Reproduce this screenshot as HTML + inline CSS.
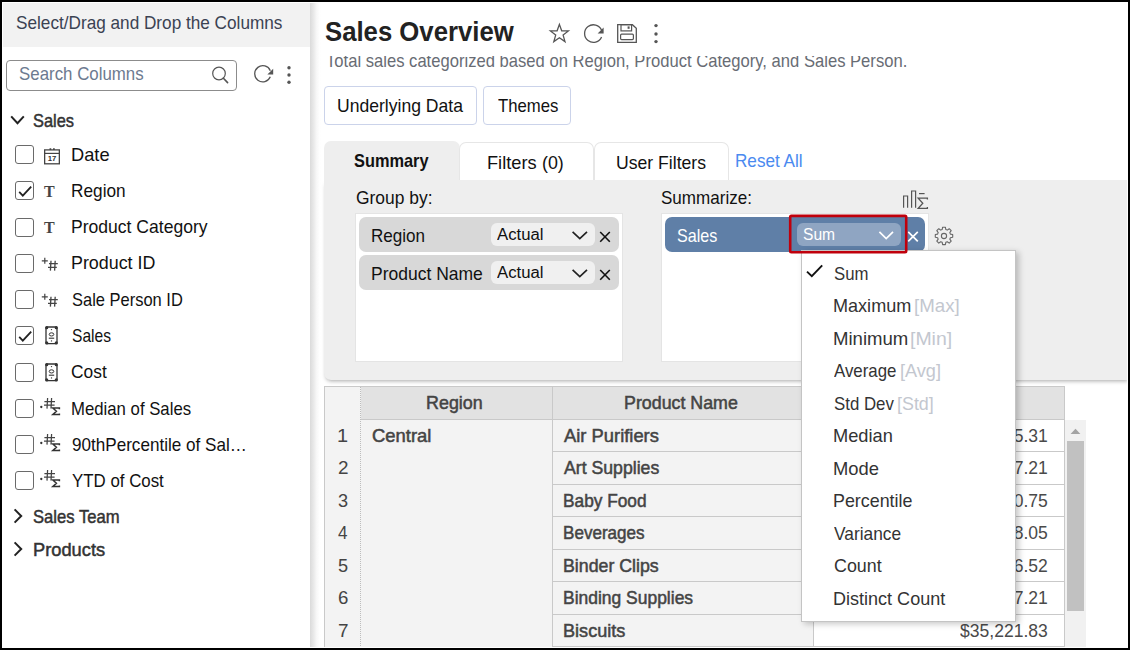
<!DOCTYPE html>
<html lang="en">
<head>
<meta charset="utf-8">
<title>Sales Overview</title>
<style>
html,body{margin:0;padding:0}
body{width:1130px;height:650px;overflow:hidden;background:#fff;position:relative;font-family:"Liberation Sans",sans-serif}
.t{position:absolute;white-space:nowrap;line-height:1;display:inline-block;transform-origin:0 50%}
.a{position:absolute;box-sizing:border-box}
svg{position:absolute;overflow:visible}
.cb{position:absolute;box-sizing:border-box;width:19px;height:19px;left:15px;border:1px solid #6a6a6a;border-radius:3px;background:#fff}
.pill{position:absolute;box-sizing:border-box;left:359px;width:260px;height:35px;border-radius:7px;background:#d8d8d8}
.sel{position:absolute;box-sizing:border-box;left:491px;width:104px;height:23px;border-radius:6px;background:#f0f0f0}
.hl{position:absolute;height:1px;background:#c9c9c9}
.vl{position:absolute;width:1px;background:#c9c9c9}
.ti{position:absolute;font-family:"Liberation Serif",serif;font-weight:700;font-size:16px;line-height:1;color:#444;left:44px}
</style>
</head>
<body>
<!-- ===== left panel ===== -->
<div class="a" style="left:2px;top:3px;width:308px;height:44px;background:#f2f2f2"></div>
<div class="a" style="left:310px;top:2px;width:12px;height:646px;background:linear-gradient(to right,#dadada 0,#e8e8e8 28%,#f7f7f7 55%,#fefefe 80%,#fff 100%)"></div>
<div class="a" style="left:6px;top:60px;width:231px;height:31px;border:1px solid #8c8c8c;border-radius:4px"></div>
<!-- search icon -->
<svg style="left:209px;top:64px" width="22" height="22" viewBox="0 0 22 22"><circle cx="10" cy="9.5" r="6.3" fill="none" stroke="#555" stroke-width="1.2"/><path d="M14.4 14.2 L18.6 18.6" stroke="#555" stroke-width="1.6" stroke-linecap="round"/></svg>
<!-- refresh icon -->
<svg style="left:252px;top:63px" width="22" height="22" viewBox="0 0 22 22"><path d="M18.31 7.77 A8.1 8.1 0 1 0 18.31 13.83" fill="none" stroke="#555" stroke-width="1.3"/><path d="M21.2 5.8 L21.2 11.6 L15.4 11.6 Z" fill="#555"/></svg>
<!-- dots -->
<svg style="left:285px;top:64px" width="8" height="22" viewBox="0 0 8 22"><circle cx="4" cy="3.7" r="1.7" fill="#555"/><circle cx="4" cy="11" r="1.7" fill="#555"/><circle cx="4" cy="18.3" r="1.7" fill="#555"/></svg>
<!-- chevrons -->
<svg style="left:9px;top:112px" width="18" height="16" viewBox="0 0 18 16"><path d="M2.2 4.4 L8.5 11.2 L14.8 4.4" fill="none" stroke="#222" stroke-width="2"/></svg>
<svg style="left:10px;top:507px" width="16" height="18" viewBox="0 0 16 18"><path d="M4.6 2.4 L11.2 9 L4.6 15.6" fill="none" stroke="#222" stroke-width="2"/></svg>
<svg style="left:10px;top:540px" width="16" height="18" viewBox="0 0 16 18"><path d="M4.6 2.4 L11.2 9 L4.6 15.6" fill="none" stroke="#222" stroke-width="2"/></svg>
<div class="cb" style="top:145.2px"></div>
<svg style="left:44px;top:148.0px" width="16" height="17" viewBox="0 0 16 17"><rect x="0.65" y="1.9" width="14.7" height="13.9" fill="none" stroke="#444" stroke-width="1.3"/><path d="M0.6 5.4 H15.4" stroke="#444" stroke-width="1.2"/><path d="M6.4 0.3 V2 M9.9 0.3 V2" stroke="#444" stroke-width="1.7"/><text x="8.1" y="12.9" font-family="Liberation Sans, sans-serif" font-size="6.4" font-weight="700" fill="#333" text-anchor="middle" textLength="8.6" lengthAdjust="spacingAndGlyphs">17</text></svg>
<div class="cb" style="top:181.4px"></div>
<svg style="left:15px;top:181.4px" width="19" height="19" viewBox="0 0 19 19"><path d="M4.2 10.9 L7.8 14.6 L16.2 5.6" fill="none" stroke="#222" stroke-width="1.8"/></svg>
<span class="ti" style="top:184.0px">T</span>
<div class="cb" style="top:217.6px"></div>
<span class="ti" style="top:220.2px">T</span>
<div class="cb" style="top:253.9px"></div>
<svg style="left:41px;top:257.1px" width="18" height="15" viewBox="0 0 18 15"><path d="M0.8 3.8 H6.8 M3.8 0.8 V6.8" stroke="#444" stroke-width="1.2" fill="none"/><path d="M10 3.8 L9.4 13.6 M14.2 3.8 L13.6 13.6 M8 6.6 H16.8 M7 10.3 H15.8" stroke="#444" stroke-width="1.3" fill="none"/></svg>
<div class="cb" style="top:290.1px"></div>
<svg style="left:41px;top:293.3px" width="18" height="15" viewBox="0 0 18 15"><path d="M0.8 3.8 H6.8 M3.8 0.8 V6.8" stroke="#444" stroke-width="1.2" fill="none"/><path d="M10 3.8 L9.4 13.6 M14.2 3.8 L13.6 13.6 M8 6.6 H16.8 M7 10.3 H15.8" stroke="#444" stroke-width="1.3" fill="none"/></svg>
<div class="cb" style="top:326.3px"></div>
<svg style="left:15px;top:326.3px" width="19" height="19" viewBox="0 0 19 19"><path d="M4.2 10.9 L7.8 14.6 L16.2 5.6" fill="none" stroke="#222" stroke-width="1.8"/></svg>
<svg style="left:45.4px;top:326.3px" width="13" height="19" viewBox="0 0 13 19"><rect x="1" y="1" width="11" height="16.6" rx="1.2" fill="none" stroke="#333" stroke-width="1.3"/><circle cx="1.7" cy="1.7" r="1.6" fill="#333"/><circle cx="11.3" cy="1.7" r="1.6" fill="#333"/><circle cx="1.7" cy="16.9" r="1.6" fill="#333"/><circle cx="11.3" cy="16.9" r="1.6" fill="#333"/><ellipse cx="6.5" cy="8.4" rx="2.3" ry="1.6" fill="none" stroke="#333" stroke-width="1"/><path d="M3.8 12.2 H9.2" stroke="#333" stroke-width="1.1"/><circle cx="6.5" cy="3.6" r="0.7" fill="#333"/><circle cx="6.5" cy="14.9" r="0.7" fill="#333"/></svg>
<div class="cb" style="top:362.5px"></div>
<svg style="left:45.4px;top:362.5px" width="13" height="19" viewBox="0 0 13 19"><rect x="1" y="1" width="11" height="16.6" rx="1.2" fill="none" stroke="#333" stroke-width="1.3"/><circle cx="1.7" cy="1.7" r="1.6" fill="#333"/><circle cx="11.3" cy="1.7" r="1.6" fill="#333"/><circle cx="1.7" cy="16.9" r="1.6" fill="#333"/><circle cx="11.3" cy="16.9" r="1.6" fill="#333"/><ellipse cx="6.5" cy="8.4" rx="2.3" ry="1.6" fill="none" stroke="#333" stroke-width="1"/><path d="M3.8 12.2 H9.2" stroke="#333" stroke-width="1.1"/><circle cx="6.5" cy="3.6" r="0.7" fill="#333"/><circle cx="6.5" cy="14.9" r="0.7" fill="#333"/></svg>
<div class="cb" style="top:398.7px"></div>
<svg style="left:39px;top:397.9px" width="22" height="19" viewBox="0 0 22 19"><circle cx="2.3" cy="9" r="1.15" fill="#333"/><path d="M8.6 0 L8 10.6 M12.6 0 L12 10.6 M5.4 3.6 H16 M5 7 H15.6" stroke="#444" stroke-width="1.25" fill="none"/><path d="M20.4 11.2 V10 H13.8 L17.4 13.3 L13.8 16.6 H20.4 V15.4" stroke="#333" stroke-width="1.5" fill="none"/></svg>
<div class="cb" style="top:435.0px"></div>
<svg style="left:39px;top:434.2px" width="22" height="19" viewBox="0 0 22 19"><circle cx="2.3" cy="9" r="1.15" fill="#333"/><path d="M8.6 0 L8 10.6 M12.6 0 L12 10.6 M5.4 3.6 H16 M5 7 H15.6" stroke="#444" stroke-width="1.25" fill="none"/><path d="M20.4 11.2 V10 H13.8 L17.4 13.3 L13.8 16.6 H20.4 V15.4" stroke="#333" stroke-width="1.5" fill="none"/></svg>
<div class="cb" style="top:471.2px"></div>
<svg style="left:39px;top:470.4px" width="22" height="19" viewBox="0 0 22 19"><circle cx="2.3" cy="9" r="1.15" fill="#333"/><path d="M8.6 0 L8 10.6 M12.6 0 L12 10.6 M5.4 3.6 H16 M5 7 H15.6" stroke="#444" stroke-width="1.25" fill="none"/><path d="M20.4 11.2 V10 H13.8 L17.4 13.3 L13.8 16.6 H20.4 V15.4" stroke="#333" stroke-width="1.5" fill="none"/></svg>

<!-- ===== main ===== -->

<!-- title icons -->
<svg style="left:548px;top:22px" width="23" height="23" viewBox="0 0 23 23"><path d="M11.40 2.40 L13.69 8.74 L20.44 8.96 L15.11 13.11 L16.98 19.59 L11.40 15.80 L5.82 19.59 L7.69 13.11 L2.36 8.96 L9.11 8.74 Z" fill="none" stroke="#555" stroke-width="1.3" stroke-linejoin="miter"/></svg>
<svg style="left:582px;top:23px" width="23" height="22" viewBox="0 0 23 22"><path d="M19.56 7.30 A8.8 8.8 0 1 0 19.56 13.90" fill="none" stroke="#555" stroke-width="1.3"/><path d="M21.6 4.6 L21.6 10.4 L15.6 10.4 Z" fill="#555"/></svg>
<svg style="left:616px;top:23px" width="22" height="21" viewBox="0 0 22 21"><path d="M1.7 1.7 H16.4 L20.3 5.4 V19.3 H1.7 Z" fill="none" stroke="#555" stroke-width="1.3"/><rect x="5" y="1.7" width="10.6" height="6.2" fill="none" stroke="#555" stroke-width="1.2"/><rect x="11.6" y="3.4" width="2" height="2.4" fill="#555"/><rect x="4.6" y="11.2" width="12.8" height="5.4" rx="1" fill="none" stroke="#555" stroke-width="1.2"/></svg>
<svg style="left:652px;top:22px" width="8" height="24" viewBox="0 0 8 24"><circle cx="4" cy="3.6" r="1.7" fill="#555"/><circle cx="4" cy="12" r="1.7" fill="#555"/><circle cx="4" cy="19.6" r="1.7" fill="#555"/></svg>
<!-- buttons -->
<div class="a" style="left:324px;top:86px;width:153px;height:39px;border:1px solid #cbd3ea;border-radius:4px"></div>
<div class="a" style="left:483px;top:86px;width:88px;height:39px;border:1px solid #cbd3ea;border-radius:4px"></div>
<!-- panel -->
<div class="a" style="left:324px;top:180px;width:806px;height:200px;background:#eee;border-radius:0 0 0 7px;box-shadow:0 3px 4px -2px rgba(0,0,0,.35)"></div>
<!-- tabs -->
<div class="a" style="left:324px;top:141px;width:136px;height:41px;background:#eee;border-radius:7px 7px 0 0"></div>
<div class="a" style="left:459px;top:142px;width:135px;height:38px;background:#fff;border:1px solid #e6e6e6;border-bottom:none;border-radius:7px 7px 0 0"></div>
<div class="a" style="left:594px;top:142px;width:135px;height:38px;background:#fff;border:1px solid #e6e6e6;border-bottom:none;border-radius:7px 7px 0 0"></div>
<!-- group by -->
<div class="a" style="left:355px;top:213px;width:268px;height:149px;background:#fff;border:1px solid #e4e4e4"></div>
<div class="pill" style="top:217px"></div>
<div class="pill" style="top:255px"></div>
<div class="sel" style="top:223px"></div>
<div class="sel" style="top:261px"></div>
<svg style="left:570px;top:228px" width="20" height="14" viewBox="0 0 20 14"><path d="M2.6 3.8 L9.8 10.6 L17 3.8" fill="none" stroke="#222" stroke-width="1.7"/></svg>
<svg style="left:570px;top:266px" width="20" height="14" viewBox="0 0 20 14"><path d="M2.6 3.8 L9.8 10.6 L17 3.8" fill="none" stroke="#222" stroke-width="1.7"/></svg>
<svg style="left:599px;top:231px" width="12" height="12" viewBox="0 0 12 12"><path d="M1.2 1 L10.8 10.8 M10.8 1 L1.2 10.8" stroke="#111" stroke-width="1.6"/></svg>
<svg style="left:599px;top:269px" width="12" height="12" viewBox="0 0 12 12"><path d="M1.2 1 L10.8 10.8 M10.8 1 L1.2 10.8" stroke="#111" stroke-width="1.6"/></svg>
<!-- summarize -->
<div class="a" style="left:661px;top:213px;width:268px;height:149px;background:#fff;border:1px solid #e4e4e4"></div>
<div class="a" style="left:665px;top:217px;width:260px;height:35px;border-radius:7px;background:#5f7fa7"></div>
<div class="a" style="left:797px;top:223px;width:104px;height:23px;border-radius:6px;background:#8fa5c2"></div>
<svg style="left:877px;top:228px" width="20" height="14" viewBox="0 0 20 14"><path d="M2.4 3.8 L9.2 10.6 L16 3.8" fill="none" stroke="#fff" stroke-width="1.7"/></svg>
<svg style="left:906.5px;top:231px" width="12" height="12" viewBox="0 0 12 12"><path d="M1.2 0.8 L10.8 10.4 M10.8 0.8 L1.2 10.4" stroke="#fff" stroke-width="1.7"/></svg>
<!-- chart sigma icon -->
<svg style="left:900px;top:188px" width="30" height="23" viewBox="0 0 30 23"><path d="M3.6 19.8 V8 H7.6 V19.8 M11.6 19.8 V3 H15.6 V19.8" fill="none" stroke="#555" stroke-width="1.2"/><path d="M19 5.6 H24.6" stroke="#555" stroke-width="1.2"/><path d="M27.4 11.6 V10.2 H18.2 L22.8 15.2 L18.2 20.4 H27.4 V19" fill="none" stroke="#555" stroke-width="1.3"/></svg>
<!-- gear -->
<svg style="left:934px;top:226px" width="20" height="20" viewBox="0 0 20 20"><g fill="none" stroke="#666" stroke-width="1.1"><circle cx="10" cy="10" r="2.6"/><path d="M8.6 1.2 h2.8 l0.4 2.3 l1.5 0.6 l1.9 -1.4 l2 2 l-1.4 1.9 l0.6 1.5 l2.3 0.4 v2.8 l-2.3 0.4 l-0.6 1.5 l1.4 1.9 l-2 2 l-1.9 -1.4 l-1.5 0.6 l-0.4 2.3 h-2.8 l-0.4 -2.3 l-1.5 -0.6 l-1.9 1.4 l-2 -2 l1.4 -1.9 l-0.6 -1.5 l-2.3 -0.4 v-2.8 l2.3 -0.4 l0.6 -1.5 l-1.4 -1.9 l2 -2 l1.9 1.4 l1.5 -0.6 z" stroke-linejoin="round"/></g></svg>
<!-- table -->
<div class="a" style="left:324px;top:386px;width:741px;height:262px;background:#f3f3f3"></div>
<div class="a" style="left:361px;top:387px;width:703px;height:32px;background:#e2e2e2"></div>
<div class="a" style="left:814px;top:420px;width:250px;height:228px;background:#fff"></div>
<div class="hl" style="left:324px;top:386px;width:741px"></div>
<div class="hl" style="left:361px;top:419px;width:704px"></div>
<div class="hl" style="left:553px;top:451px;width:512px"></div>
<div class="hl" style="left:553px;top:484px;width:512px"></div>
<div class="hl" style="left:553px;top:516px;width:512px"></div>
<div class="hl" style="left:553px;top:549px;width:512px"></div>
<div class="hl" style="left:553px;top:581px;width:512px"></div>
<div class="hl" style="left:553px;top:614px;width:512px"></div>
<div class="hl" style="left:553px;top:646px;width:512px"></div>
<div class="vl" style="left:324px;top:386px;height:262px"></div>
<div class="a" style="left:360px;top:387px;width:0;height:261px;border-left:1px dotted #bdbdbd"></div>
<div class="vl" style="left:552px;top:387px;height:261px"></div>
<div class="vl" style="left:813px;top:387px;height:261px"></div>
<div class="vl" style="left:1064px;top:387px;height:261px"></div>
<!-- scrollbar -->
<div class="a" style="left:1065px;top:420px;width:21px;height:227px;background:#f1f1f1"></div>
<div class="a" style="left:1067px;top:441px;width:17px;height:170px;background:#c1c1c1"></div>
<svg style="left:1070px;top:428px" width="11" height="7" viewBox="0 0 11 7"><path d="M0.6 6 L5.5 0.8 L10.4 6 Z" fill="#a3a3a3"/></svg>
<span class="t" style="left:15.9px;top:13px;font-size:17.7px;line-height:20px;color:#3b4252;transform:scaleX(0.9712);">Select/Drag and Drop the Columns</span>
<span class="t" style="left:19.2px;top:64px;font-size:17.7px;line-height:20px;color:#6c7a90;transform:scaleX(0.9536);">Search Columns</span>
<span class="t" style="left:33.1px;top:110px;font-size:19.0px;line-height:21px;color:#333;-webkit-text-stroke:0.5px currentColor;transform:scaleX(0.8634);">Sales</span>
<span class="t" style="left:70.8px;top:145px;font-size:17.7px;line-height:20px;color:#111;transform:scaleX(1.0335);">Date</span>
<span class="t" style="left:70.9px;top:181px;font-size:17.7px;line-height:20px;color:#111;transform:scaleX(0.9748);">Region</span>
<span class="t" style="left:70.9px;top:217px;font-size:17.7px;line-height:20px;color:#111;transform:scaleX(0.9923);">Product Category</span>
<span class="t" style="left:70.8px;top:253px;font-size:17.7px;line-height:20px;color:#111;transform:scaleX(1.0104);">Product ID</span>
<span class="t" style="left:71.6px;top:290px;font-size:17.7px;line-height:20px;color:#111;transform:scaleX(0.9317);">Sale Person ID</span>
<span class="t" style="left:71.6px;top:326px;font-size:17.7px;line-height:20px;color:#111;transform:scaleX(0.8808);">Sales</span>
<span class="t" style="left:71.4px;top:362px;font-size:17.7px;line-height:20px;color:#111;transform:scaleX(0.9819);">Cost</span>
<span class="t" style="left:70.9px;top:399px;font-size:17.7px;line-height:20px;color:#111;transform:scaleX(0.9467);">Median of Sales</span>
<span class="t" style="left:71.5px;top:435px;font-size:17.7px;line-height:20px;color:#111;transform:scaleX(0.9664);">90thPercentile of Sal…</span>
<span class="t" style="left:71.9px;top:471px;font-size:17.7px;line-height:20px;color:#111;transform:scaleX(0.9530);">YTD of Cost</span>
<span class="t" style="left:33.2px;top:506px;font-size:19.0px;line-height:21px;color:#333;-webkit-text-stroke:0.5px currentColor;transform:scaleX(0.8749);">Sales Team</span>
<span class="t" style="left:32.5px;top:539px;font-size:19.0px;line-height:21px;color:#333;-webkit-text-stroke:0.5px currentColor;transform:scaleX(0.9624);">Products</span>
<span class="t" style="left:324.9px;top:17px;font-size:27.0px;line-height:30px;color:#222;font-weight:700;transform:scaleX(0.9523);">Sales Overview</span>
<span class="t" style="left:325.6px;top:51px;font-size:17.7px;line-height:20px;color:#686c74;transform:scaleX(0.9389);">Total sales categorized based on Region, Product Category, and Sales Person.</span>
<span class="t" style="left:337.0px;top:96px;font-size:17.7px;line-height:20px;color:#111;transform:scaleX(0.9931);">Underlying Data</span>
<span class="t" style="left:497.6px;top:96px;font-size:17.7px;line-height:20px;color:#111;transform:scaleX(0.9450);">Themes</span>
<span class="t" style="left:353.9px;top:151px;font-size:17.7px;line-height:20px;color:#111;font-weight:700;transform:scaleX(0.9249);">Summary</span>
<span class="t" style="left:486.8px;top:153px;font-size:17.7px;line-height:20px;color:#111;transform:scaleX(1.0292);">Filters</span>
<span class="t" style="left:541.9px;top:153px;font-size:17.7px;line-height:20px;color:#111;transform:scaleX(1.0092);">(0)</span>
<span class="t" style="left:616.2px;top:153px;font-size:17.7px;line-height:20px;color:#111;transform:scaleX(0.9955);">User Filters</span>
<span class="t" style="left:735.0px;top:151px;font-size:17.7px;line-height:20px;color:#4a8af0;transform:scaleX(0.9686);">Reset All</span>
<span class="t" style="left:356.1px;top:188px;font-size:17.7px;line-height:20px;color:#111;transform:scaleX(0.9845);">Group by:</span>
<span class="t" style="left:661.2px;top:188px;font-size:17.7px;line-height:20px;color:#111;transform:scaleX(0.9637);">Summarize:</span>
<span class="t" style="left:371.0px;top:226px;font-size:17.7px;line-height:20px;color:#111;transform:scaleX(0.9654);">Region</span>
<span class="t" style="left:371.0px;top:264px;font-size:17.7px;line-height:20px;color:#111;transform:scaleX(0.9891);">Product Name</span>
<span class="t" style="left:497.0px;top:226px;font-size:15.6px;line-height:17px;color:#111;transform:scaleX(1.0742);">Actual</span>
<span class="t" style="left:497.0px;top:264px;font-size:15.6px;line-height:17px;color:#111;transform:scaleX(1.0742);">Actual</span>
<span class="t" style="left:677.3px;top:226px;font-size:17.7px;line-height:20px;color:#fff;transform:scaleX(0.9112);">Sales</span>
<span class="t" style="left:802.9px;top:226px;font-size:15.6px;line-height:17px;color:#fff;transform:scaleX(1.0024);">Sum</span>
<span class="t" style="left:425.8px;top:393px;font-size:17.7px;line-height:20px;color:#444;-webkit-text-stroke:0.5px currentColor;transform:scaleX(1.0122);">Region</span>
<span class="t" style="left:623.5px;top:393px;font-size:17.7px;line-height:20px;color:#444;-webkit-text-stroke:0.5px currentColor;transform:scaleX(1.0071);">Product Name</span>
<span class="t" style="left:371.9px;top:426px;font-size:17.7px;line-height:20px;color:#444;-webkit-text-stroke:0.5px currentColor;transform:scaleX(1.0412);">Central</span>
<span class="t" style="left:564.4px;top:426px;font-size:17.7px;line-height:20px;color:#444;-webkit-text-stroke:0.5px currentColor;transform:scaleX(1.0383);">Air Purifiers</span>
<span class="t" style="left:337.1px;top:426px;font-size:17.7px;line-height:20px;color:#444;transform:scaleX(1.1280);">1</span>
<span class="t" style="left:564.4px;top:458px;font-size:17.7px;line-height:20px;color:#444;-webkit-text-stroke:0.5px currentColor;transform:scaleX(0.9991);">Art Supplies</span>
<span class="t" style="left:337.6px;top:458px;font-size:17.7px;line-height:20px;color:#444;transform:scaleX(1.0675);">2</span>
<span class="t" style="left:563.0px;top:491px;font-size:17.7px;line-height:20px;color:#444;-webkit-text-stroke:0.5px currentColor;transform:scaleX(0.9765);">Baby Food</span>
<span class="t" style="left:337.9px;top:491px;font-size:17.7px;line-height:20px;color:#444;transform:scaleX(1.0256);">3</span>
<span class="t" style="left:563.0px;top:523px;font-size:17.7px;line-height:20px;color:#444;-webkit-text-stroke:0.5px currentColor;transform:scaleX(0.9652);">Beverages</span>
<span class="t" style="left:338.2px;top:523px;font-size:17.7px;line-height:20px;color:#444;transform:scaleX(0.9650);">4</span>
<span class="t" style="left:562.9px;top:556px;font-size:17.7px;line-height:20px;color:#444;-webkit-text-stroke:0.5px currentColor;transform:scaleX(1.0036);">Binder Clips</span>
<span class="t" style="left:337.9px;top:556px;font-size:17.7px;line-height:20px;color:#444;transform:scaleX(1.0256);">5</span>
<span class="t" style="left:563.0px;top:588px;font-size:17.7px;line-height:20px;color:#444;-webkit-text-stroke:0.5px currentColor;transform:scaleX(0.9871);">Binding Supplies</span>
<span class="t" style="left:337.7px;top:588px;font-size:17.7px;line-height:20px;color:#444;transform:scaleX(1.0539);">6</span>
<span class="t" style="left:562.9px;top:621px;font-size:17.7px;line-height:20px;color:#444;-webkit-text-stroke:0.5px currentColor;transform:scaleX(1.0230);">Biscuits</span>
<span class="t" style="left:337.6px;top:621px;font-size:17.7px;line-height:20px;color:#444;transform:scaleX(1.0697);">7</span>
<span class="t" style="left:959.8px;top:426px;font-size:17.7px;line-height:20px;color:#4a4a4a;transform:scaleX(0.9914);">$48,915.31</span>
<span class="t" style="left:959.8px;top:458px;font-size:17.7px;line-height:20px;color:#4a4a4a;transform:scaleX(0.9914);">$21,327.21</span>
<span class="t" style="left:959.8px;top:491px;font-size:17.7px;line-height:20px;color:#4a4a4a;transform:scaleX(0.9914);">$63,410.75</span>
<span class="t" style="left:959.8px;top:523px;font-size:17.7px;line-height:20px;color:#4a4a4a;transform:scaleX(0.9914);">$52,198.05</span>
<span class="t" style="left:959.8px;top:556px;font-size:17.7px;line-height:20px;color:#4a4a4a;transform:scaleX(0.9914);">$17,646.52</span>
<span class="t" style="left:959.8px;top:588px;font-size:17.7px;line-height:20px;color:#4a4a4a;transform:scaleX(0.9914);">$29,857.21</span>
<span class="t" style="left:959.8px;top:621px;font-size:17.7px;line-height:20px;color:#4a4a4a;transform:scaleX(0.9914);">$35,221.83</span>
<div class="a" style="left:323px;top:46px;width:600px;height:10px;background:#fff"></div>

<div class="a" style="left:801px;top:250px;width:215px;height:372px;background:#fff;border:1px solid #c4c4c4;box-shadow:3px 2px 6px rgba(0,0,0,.22)"></div>
<svg style="left:805px;top:263px" width="20" height="16" viewBox="0 0 20 16"><path d="M2 8.6 L6.8 13.2 L17.2 2.4" fill="none" stroke="#111" stroke-width="1.9"/></svg>

<svg style="left:785px;top:211px" width="126" height="46" viewBox="0 0 126 46"><rect x="5.2" y="4.9" width="116" height="36.3" rx="1.2" fill="none" stroke="#c0000c" stroke-width="2.6"/></svg>
<span class="t" style="left:833.6px;top:264px;font-size:17.7px;line-height:20px;color:#333;transform:scaleX(0.9477);">Sum</span>
<span class="t" style="left:832.9px;top:296px;font-size:17.7px;line-height:20px;color:#333;transform:scaleX(1.0212);">Maximum</span>
<span class="t" style="left:913.7px;top:296px;font-size:17.7px;line-height:20px;color:#c3c7cf;transform:scaleX(1.0560);">[Max]</span>
<span class="t" style="left:832.9px;top:329px;font-size:17.7px;line-height:20px;color:#333;transform:scaleX(1.0504);">Minimum</span>
<span class="t" style="left:910.2px;top:329px;font-size:17.7px;line-height:20px;color:#c3c7cf;transform:scaleX(1.1004);">[Min]</span>
<span class="t" style="left:834.4px;top:361px;font-size:17.7px;line-height:20px;color:#333;transform:scaleX(0.9515);">Average</span>
<span class="t" style="left:899.7px;top:361px;font-size:17.7px;line-height:20px;color:#c3c7cf;transform:scaleX(1.0250);">[Avg]</span>
<span class="t" style="left:833.6px;top:394px;font-size:17.7px;line-height:20px;color:#333;transform:scaleX(0.9508);">Std Dev</span>
<span class="t" style="left:897.1px;top:394px;font-size:17.7px;line-height:20px;color:#c3c7cf;transform:scaleX(1.0102);">[Std]</span>
<span class="t" style="left:832.9px;top:426px;font-size:17.7px;line-height:20px;color:#333;transform:scaleX(1.0323);">Median</span>
<span class="t" style="left:832.9px;top:459px;font-size:17.7px;line-height:20px;color:#333;transform:scaleX(1.0379);">Mode</span>
<span class="t" style="left:832.9px;top:491px;font-size:17.7px;line-height:20px;color:#333;transform:scaleX(1.0103);">Percentile</span>
<span class="t" style="left:834.3px;top:524px;font-size:17.7px;line-height:20px;color:#333;transform:scaleX(0.9788);">Variance</span>
<span class="t" style="left:833.5px;top:556px;font-size:17.7px;line-height:20px;color:#333;transform:scaleX(1.0093);">Count</span>
<span class="t" style="left:832.9px;top:589px;font-size:17.7px;line-height:20px;color:#333;transform:scaleX(1.0192);">Distinct Count</span>
<!-- frame -->
<div class="a" style="left:0;top:0;width:1130px;height:650px;border:2px solid #000;box-shadow:inset 0 0 0 1px #fff"></div>
</body>
</html>
